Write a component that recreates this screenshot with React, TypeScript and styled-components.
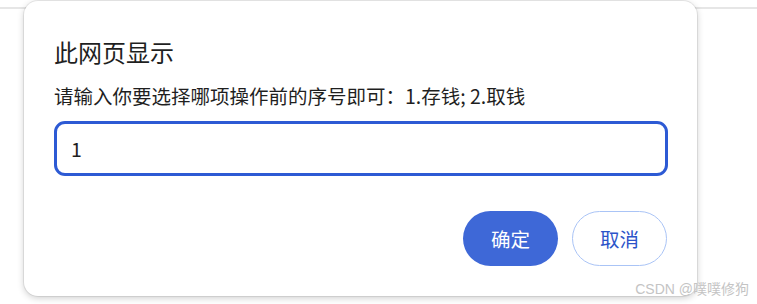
import React from "react";
import styled, { createGlobalStyle } from "styled-components";

const Global = createGlobalStyle`
  html, body { margin: 0; padding: 0; background: #ffffff; }
  body { font-family: "Microsoft YaHei", "Noto Sans CJK SC", "Noto Sans", sans-serif; }
`;

const Page = styled.div`
  position: relative;
  width: 757px;
  height: 304px;
  overflow: hidden;
  background: #ffffff;
`;

const TopLine = styled.div`
  height: 7px;
  border-bottom: 2px solid #e6e6e6;
`;

const Dialog = styled.div`
  position: absolute;
  left: 24px;
  top: 1px;
  width: 673px;
  height: 295px;
  box-sizing: border-box;
  background: #ffffff;
  border-radius: 14px;
  box-shadow: 0 0 0 1px rgba(0, 0, 0, 0.07), 0 2px 7px rgba(0, 0, 0, 0.2);
  padding: 35px 30px 0 30px;
  display: flex;
  flex-direction: column;
`;

const Title = styled.div`
  font-size: 24px;
  line-height: 32px;
  color: #1f1f1f;
  margin-bottom: 15px;
`;

const Message = styled.div`
  font-size: 19.5px;
  line-height: 26px;
  color: #1f1f1f;
  margin-bottom: 12px;
  white-space: nowrap;
`;

const Input = styled.input`
  box-sizing: border-box;
  width: 614px;
  height: 55px;
  border: 3px solid #2d5ad4;
  border-radius: 11px;
  padding: 0 14px;
  font-size: 19.5px;
  color: #1f1f1f;
  font-family: "Microsoft YaHei", "Noto Sans CJK SC", "Noto Sans", sans-serif;
  outline: none;
`;

const Buttons = styled.div`
  display: flex;
  justify-content: flex-end;
  gap: 14px;
  margin-top: 35px;
  width: 613px;
`;

const Button = styled.button<{ $primary?: boolean }>`
  box-sizing: border-box;
  width: 95px;
  height: 55px;
  border-radius: 28px;
  font-size: 19.5px;
  font-family: "Microsoft YaHei", "Noto Sans CJK SC", "Noto Sans", sans-serif;
  cursor: pointer;
  background: ${(p) => (p.$primary ? "#3e68d7" : "#ffffff")};
  color: ${(p) => (p.$primary ? "#ffffff" : "#2c54c9")};
  border: ${(p) => (p.$primary ? "none" : "1.5px solid #aac4f6")};
`;

const Watermark = styled.div`
  position: absolute;
  right: 8px;
  bottom: 6px;
  font-size: 14px;
  line-height: 18px;
  color: #c4c4c4;
  font-family: "Liberation Sans", "Noto Sans CJK SC", sans-serif;
  white-space: nowrap;
`;

export default function App() {
  return (
    <Page>
      <Global />
      <TopLine />
      <Dialog>
        <Title>此网页显示</Title>
        <Message>请输入你要选择哪项操作前的序号即可：1.存钱; 2.取钱</Message>
        <Input defaultValue="1" />
        <Buttons>
          <Button $primary>确定</Button>
          <Button>取消</Button>
        </Buttons>
      </Dialog>
      <Watermark>CSDN @噗噗修狗</Watermark>
    </Page>
  );
}
